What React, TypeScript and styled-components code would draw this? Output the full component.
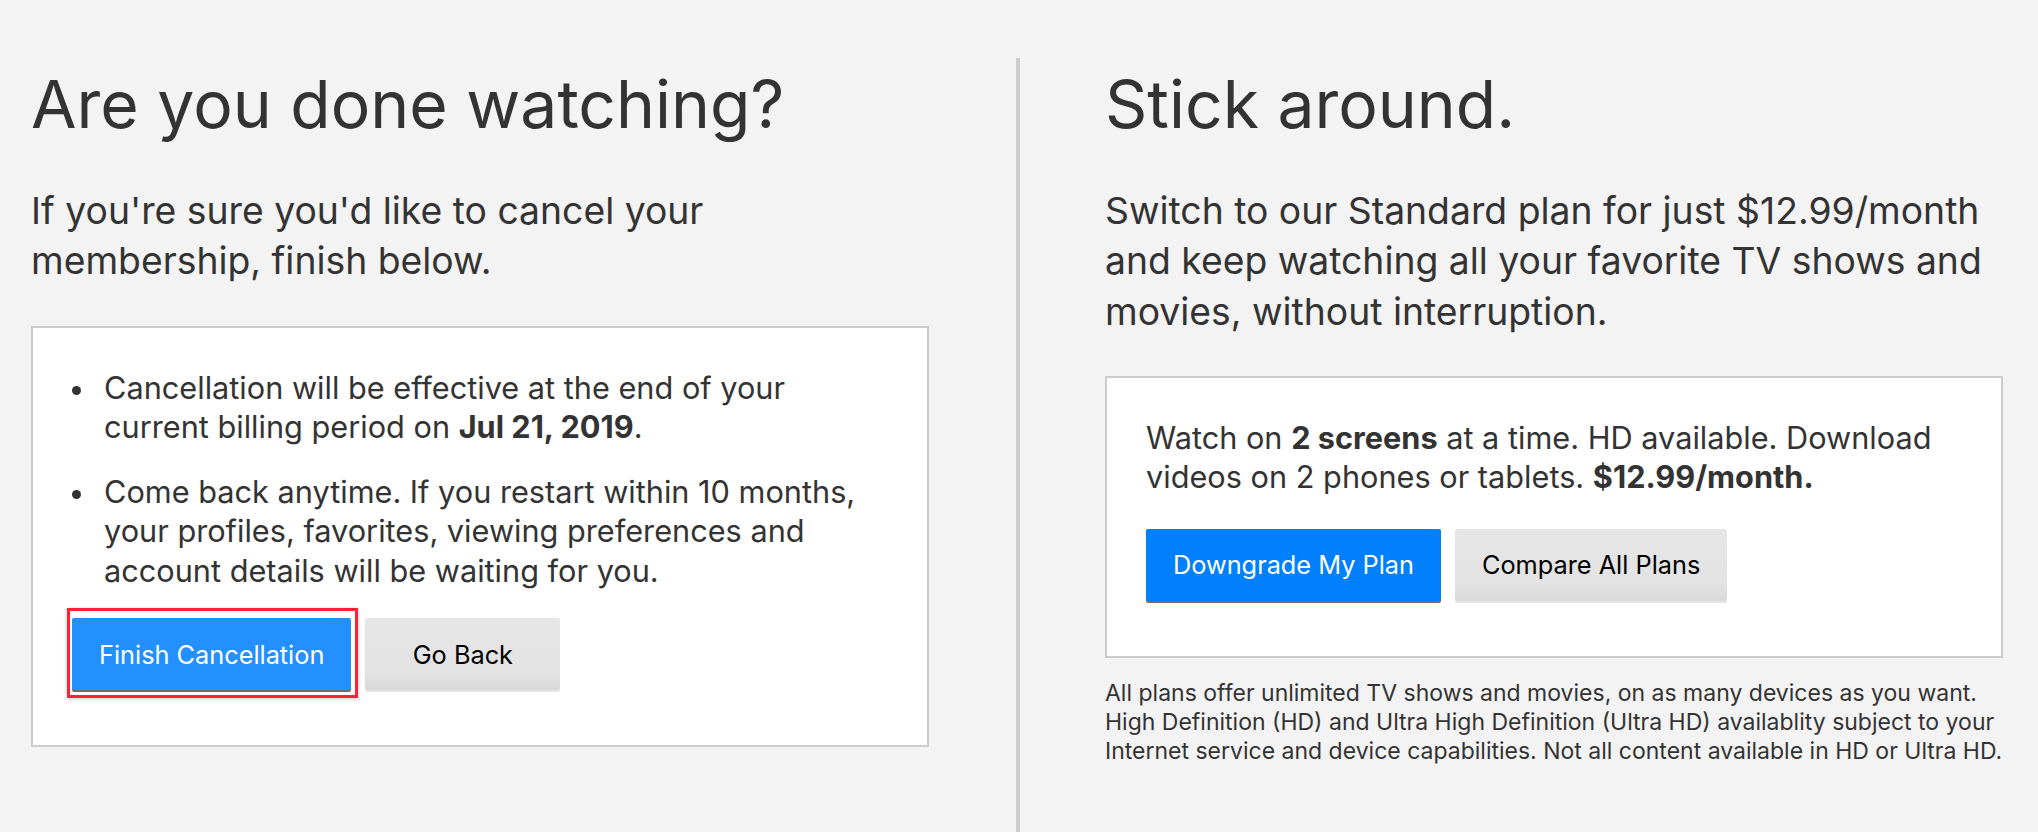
import React from "react";
import styled, { createGlobalStyle } from "styled-components";

const GlobalStyle = createGlobalStyle`
  html, body { margin: 0; padding: 0; }
  body {
    background: #f3f3f3;
    color: #333333;
    font-family: Inter, "Liberation Sans", Arial, sans-serif;
    -webkit-font-smoothing: antialiased;
  }
`;

const Page = styled.div`
  display: grid;
  grid-template-columns: 1016px 4px 1fr;
  min-height: 832px;
`;

const Column = styled.section<{ $pl: number; $pr: number }>`
  padding: 66px ${(p) => p.$pr}px 0 ${(p) => p.$pl}px;
`;

const Divider = styled.div`
  margin-top: 58px;
  background: #cccccc;
`;

const Heading = styled.h1`
  margin: 0;
  font-size: 66px;
  line-height: 76px;
  font-weight: 400;
  color: #333;
`;

const Lead = styled.p`
  margin: 44px 0 0;
  font-size: 37.3px;
  line-height: 50.3px;
  color: #333;
  white-space: nowrap;
`;

const Card = styled.div`
  margin-top: 39px;
  background: #ffffff;
  border: 2px solid #cccccc;
  padding: 40px 39px 55px;
`;

const List = styled.ul`
  list-style: none;
  margin: 0;
  padding: 0;
  display: flex;
  flex-direction: column;
  gap: 25px;
`;

const Item = styled.li`
  display: flex;
  font-size: 30.7px;
  line-height: 39.5px;
  white-space: nowrap;
  &::before {
    content: "";
    flex: 0 0 9px;
    height: 9px;
    margin: 18px 23px 0 0;
    border-radius: 50%;
    background: #333;
  }
`;

const Text = styled.p`
  margin: 0;
  font-size: 30.7px;
  line-height: 39.5px;
  white-space: nowrap;
`;

const Row = styled.div<{ $top: number }>`
  display: flex;
  align-items: flex-start;
  gap: 14px;
  margin-top: ${(p) => p.$top}px;
`;

const Flag = styled.span`
  display: inline-flex;
  margin: -10px -7px -8px -5px;
  padding: 7px 4px 5px 2px;
  border: 3px solid #ff2236;
  box-shadow: 0 1px 4px rgba(0, 0, 0, 0.22);
`;

const Button = styled.button<{ $variant: "blue" | "bright" | "gray" }>`
  font-family: inherit;
  font-size: 25.3px;
  height: 72px;
  min-width: 195px;
  padding: 0 27px;
  border: 0;
  border-radius: 2px;
  cursor: pointer;
  white-space: nowrap;
  color: ${(p) => (p.$variant === "gray" ? "#000" : "#fff")};
  background: ${(p) =>
    p.$variant === "gray"
      ? "linear-gradient(#e6e6e6, #e3e3e3 75%, #d9d9d9)"
      : p.$variant === "bright"
      ? "#2490ff"
      : "#0080ff"};
  box-shadow: ${(p) =>
    p.$variant === "gray" ? "0 2px 0 rgba(0,0,0,0.1)" : "0 2px 0 #6f6f6f"};
`;

const Note = styled.p`
  margin: 21px 0 0;
  font-size: 23px;
  line-height: 29px;
  color: #333;
  white-space: nowrap;
`;

export default function App() {
  return (
    <>
      <GlobalStyle />
      <Page>
        <Column $pl={31} $pr={87}>
          <Heading>Are you done watching?</Heading>
          <Lead>
            If you're sure you'd like to cancel your
            <br />
            membership, finish below.
          </Lead>
          <Card>
            <List>
              <Item>
                <span>
                  Cancellation will be effective at the end of your
                  <br />
                  current billing period on <b>Jul 21, 2019</b>.
                </span>
              </Item>
              <Item>
                <span>
                  Come back anytime. If you restart within 10 months,
                  <br />
                  your profiles, favorites, viewing preferences and
                  <br />
                  account details will be waiting for you.
                </span>
              </Item>
            </List>
            <Row $top={28}>
              <Flag>
                <Button $variant="bright">Finish Cancellation</Button>
              </Flag>
              <Button $variant="gray">Go Back</Button>
            </Row>
          </Card>
        </Column>
        <Divider />
        <Column $pl={85} $pr={35}>
          <Heading>Stick around.</Heading>
          <Lead>
            Switch to our Standard plan for just $12.99/month
            <br />
            and keep watching all your favorite TV shows and
            <br />
            movies, without interruption.
          </Lead>
          <Card>
            <Text>
              Watch on <b>2 screens</b> at a time. HD available. Download
              <br />
              videos on 2 phones or tablets. <b>$12.99/month.</b>
            </Text>
            <Row $top={32}>
              <Button $variant="blue">Downgrade My Plan</Button>
              <Button $variant="gray">Compare All Plans</Button>
            </Row>
          </Card>
          <Note>
            All plans offer unlimited TV shows and movies, on as many devices as you want.
            <br />
            High Definition (HD) and Ultra High Definition (Ultra HD) availablity subject to your
            <br />
            Internet service and device capabilities. Not all content available in HD or Ultra HD.
          </Note>
        </Column>
      </Page>
    </>
  );
}
